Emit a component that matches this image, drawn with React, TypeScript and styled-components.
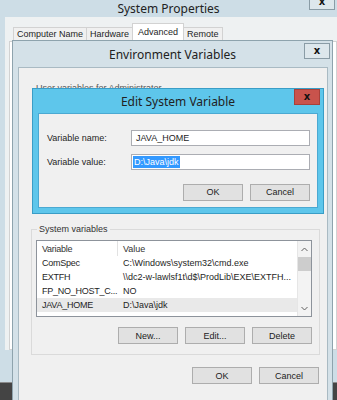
import styled, { createGlobalStyle } from "styled-components";

const Global = createGlobalStyle`
  body {
    margin: 0;
    background: #cddde6;
  }
`;

const Desktop = styled.div`
  position: relative;
  width: 337px;
  height: 400px;
  overflow: hidden;
  display: flex;
  flex-direction: column;
  background: #cddde6;
  font-family: "Liberation Sans", Arial, sans-serif;
  font-size: 9px;
  color: #1e1e1e;
`;

const Window = styled.div`
  flex: 1;
  display: flex;
  flex-direction: column;
`;

const TitleBar = styled.div<{ $h: number }>`
  position: relative;
  height: ${p => p.$h}px;
  flex: none;
  display: flex;
  align-items: center;
  justify-content: center;
  font-family: "Noto Sans", sans-serif;
  font-size: 12px;
  color: #222;
`;

const CloseBox = styled.div<{ $red?: boolean; $top: number; $right: number }>`
  position: absolute;
  top: ${p => p.$top}px;
  right: ${p => p.$right}px;
  width: 26px;
  height: 16px;
  display: flex;
  align-items: center;
  justify-content: center;
  box-sizing: border-box;
  background: ${p => (p.$red ? "#c9534c" : "#dde7ec")};
  border: 1px solid ${p => (p.$red ? "#a8403a" : "#8a9ca6")};
  font-family: "DejaVu Sans", sans-serif;
  font-weight: bold;
  font-size: 10px;
  line-height: 10px;
  color: #111;
`;

const TopClose = styled(CloseBox)`
  align-items: flex-end;
  padding-bottom: 2px;
`;

const SysBody = styled.div`
  flex: 1;
  margin: 0 0 32px 5px;
  background: #eef1f2;
  padding: 6px 0 0 4px;
  display: flex;
  flex-direction: column;
`;

const Tabs = styled.div`
  display: flex;
  align-items: flex-end;
  height: 18px;
  padding-left: 5px;
`;

const Tab = styled.div<{ $active?: boolean }>`
  height: ${p => (p.$active ? 18 : 14)}px;
  box-sizing: border-box;
  padding: 0 ${p => (p.$active ? 5 : 3)}px;
  display: flex;
  align-items: ${p => (p.$active ? "flex-start" : "center")};
  padding-top: ${p => (p.$active ? 3 : 0)}px;
  background: ${p => (p.$active ? "#ffffff" : "#f0f0f0")};
  border: 1px solid #d2d2d2;
  border-bottom: ${p => (p.$active ? "none" : "1px solid #d2d2d2")};
  margin-left: -1px;
`;

const TabPanel = styled.div`
  flex: 1;
  background: #ffffff;
  border: 1px solid #d2d2d2;
`;

const Taskbar = styled.div`
  height: 17px;
  flex: none;
  background: #444;
  border-top: 1px solid #8a8a8a;
`;

const EnvWindow = styled.div`
  position: absolute;
  left: 12px;
  top: 40px;
  width: 321px;
  height: 380px;
  box-sizing: border-box;
  background: #d4e1e8;
  border: 1px solid #8ea3ad;
  display: flex;
  flex-direction: column;
`;

const EnvClient = styled.div`
  flex: 1;
  margin: 0 4px 0 5px;
  background: #f0f0f0;
  border: 1px solid #a9bac3;
  display: flex;
  flex-direction: column;
`;

const UserSection = styled.div`
  height: 156px;
  flex: none;
  box-sizing: border-box;
  padding: 15px 0 0 17px;
  color: #555;
`;

const Group = styled.fieldset`
  margin: 0 7px 0 12px;
  padding: 0 7px 10px 4px;
  border: 1px solid #dadada;
  min-width: 0;

  legend {
    margin-left: 1px;
    padding: 0 2px;
    line-height: 11px;
    color: #333;
  }
`;

const ListView = styled.div`
  margin-top: 5px;
  height: 77px;
  box-sizing: border-box;
  border: 1px solid #8d939b;
  background: #fff;
  display: flex;
  overflow: hidden;
`;

const ListBody = styled.div`
  flex: 1;
  overflow: hidden;
`;

const Row = styled.div<{ $head?: boolean; $sel?: boolean }>`
  display: grid;
  grid-template-columns: 81px 1fr;
  height: ${p => (p.$head ? 15 : 14)}px;
  align-items: center;
  background: ${p => (p.$sel ? "#e9e9e9" : "transparent")};
  color: ${p => (p.$head ? "#333" : "#1e1e1e")};
  white-space: nowrap;

  span {
    padding-left: 5px;
    overflow: hidden;
    height: 100%;
    display: flex;
    align-items: center;
  }
  span:first-child {
    letter-spacing: -0.25px;
    border-right: ${p => (p.$head ? "1px solid #e2e2e2" : "none")};
  }
`;

const Scrollbar = styled.div`
  width: 13px;
  flex: none;
  display: flex;
  flex-direction: column;
  background: #f3f3f3;
  border-left: 1px solid #e6e6e6;
`;

const Arrow = styled.div`
  height: 16px;
  display: flex;
  align-items: center;
  justify-content: center;
`;

const Thumb = styled.div`
  height: 14px;
  background: #cdcdcd;
`;

const Track = styled.div`
  flex: 1;
`;

const ButtonRow = styled.div<{ $mt: number; $mr: number }>`
  display: flex;
  justify-content: flex-end;
  gap: 7px;
  margin-top: ${p => p.$mt}px;
  margin-right: ${p => p.$mr}px;
`;

const Button = styled.div`
  width: 60px;
  height: 17px;
  box-sizing: border-box;
  display: flex;
  align-items: center;
  justify-content: center;
  background: #e1e1e1;
  border: 1px solid #adadad;
  color: #222;
`;

const EditDialog = styled.div`
  position: absolute;
  left: 19px;
  top: 47px;
  width: 292px;
  height: 126px;
  box-sizing: border-box;
  background: #5ec6eb;
  border: 1px solid #3a9dc6;
  display: flex;
  flex-direction: column;
`;

const EditClient = styled.div`
  flex: 1;
  margin: 0 5px 5px 5px;
  background: #f0f0f0;
  border: 1px solid #4ba9d2;
  display: grid;
  grid-template-columns: 84px 179px;
  grid-auto-rows: 16px;
  row-gap: 8px;
  align-items: center;
  padding: 16px 8px 0 8px;
  align-content: start;
`;

const Field = styled.div`
  height: 16px;
  box-sizing: border-box;
  background: #fff;
  border: 1px solid #abadb3;
  display: flex;
  align-items: center;
  padding-left: 4px;
`;

const Selected = styled.span`
  background: #3399ff;
  color: #fff;
  padding: 1px 1px;
  margin-left: -3px;
`;

const DialogButtons = styled.div`
  grid-column: 1 / -1;
  display: flex;
  justify-content: flex-end;
  gap: 7px;
  margin-top: 12px;
`;

const Chevron = ({ up }: { up?: boolean }) => (
  <svg width="7" height="5" viewBox="0 0 7 5">
    <polyline
      points={up ? "0.5,4 3.5,1 6.5,4" : "0.5,1 3.5,4 6.5,1"}
      fill="none"
      stroke="#606060"
      strokeWidth="1"
    />
  </svg>
);

const rows: [string, string][] = [
  ["ComSpec", "C:\\Windows\\system32\\cmd.exe"],
  ["EXTFH", "\\\\dc2-w-lawlsf1t\\d$\\ProdLib\\EXE\\EXTFH..."],
  ["FP_NO_HOST_C...", "NO"],
  ["JAVA_HOME", "D:\\Java\\jdk"],
  ["NUMBER_OF_P...", "4"],
];

export default function App() {
  return (
    <Desktop>
      <Global />
      <Window>
        <TitleBar $h={17}>
          System Properties
          <TopClose $top={-6} $right={2}>x</TopClose>
        </TitleBar>
        <SysBody>
          <Tabs>
            <Tab>Computer Name</Tab>
            <Tab>Hardware</Tab>
            <Tab $active>Advanced</Tab>
            <Tab>Remote</Tab>
          </Tabs>
          <TabPanel />
        </SysBody>
      </Window>
      <Taskbar />

      <EnvWindow>
        <TitleBar $h={26}>
          Environment Variables
          <CloseBox $top={2} $right={2}>x</CloseBox>
        </TitleBar>
        <EnvClient>
          <UserSection>User variables for Administrator</UserSection>
          <Group>
            <legend>System variables</legend>
            <ListView>
              <ListBody>
                <Row $head>
                  <span>Variable</span>
                  <span>Value</span>
                </Row>
                {rows.map(([name, value]) => (
                  <Row key={name} $sel={name === "JAVA_HOME"}>
                    <span>{name}</span>
                    <span>{value}</span>
                  </Row>
                ))}
              </ListBody>
              <Scrollbar>
                <Arrow>
                  <Chevron up />
                </Arrow>
                <Thumb />
                <Track />
                <Arrow>
                  <Chevron />
                </Arrow>
              </Scrollbar>
            </ListView>
            <ButtonRow $mt={10} $mr={0}>
              <Button>New...</Button>
              <Button>Edit...</Button>
              <Button>Delete</Button>
            </ButtonRow>
          </Group>
          <ButtonRow $mt={12} $mr={8}>
            <Button>OK</Button>
            <Button>Cancel</Button>
          </ButtonRow>
        </EnvClient>

        <EditDialog>
          <TitleBar $h={24}>
            Edit System Variable
            <CloseBox $red $top={0} $right={3}>x</CloseBox>
          </TitleBar>
          <EditClient>
            <span>Variable name:</span>
            <Field>JAVA_HOME</Field>
            <span>Variable value:</span>
            <Field>
              <Selected>D:\Java\jdk</Selected>
            </Field>
            <DialogButtons>
              <Button>OK</Button>
              <Button>Cancel</Button>
            </DialogButtons>
          </EditClient>
        </EditDialog>
      </EnvWindow>
    </Desktop>
  );
}
